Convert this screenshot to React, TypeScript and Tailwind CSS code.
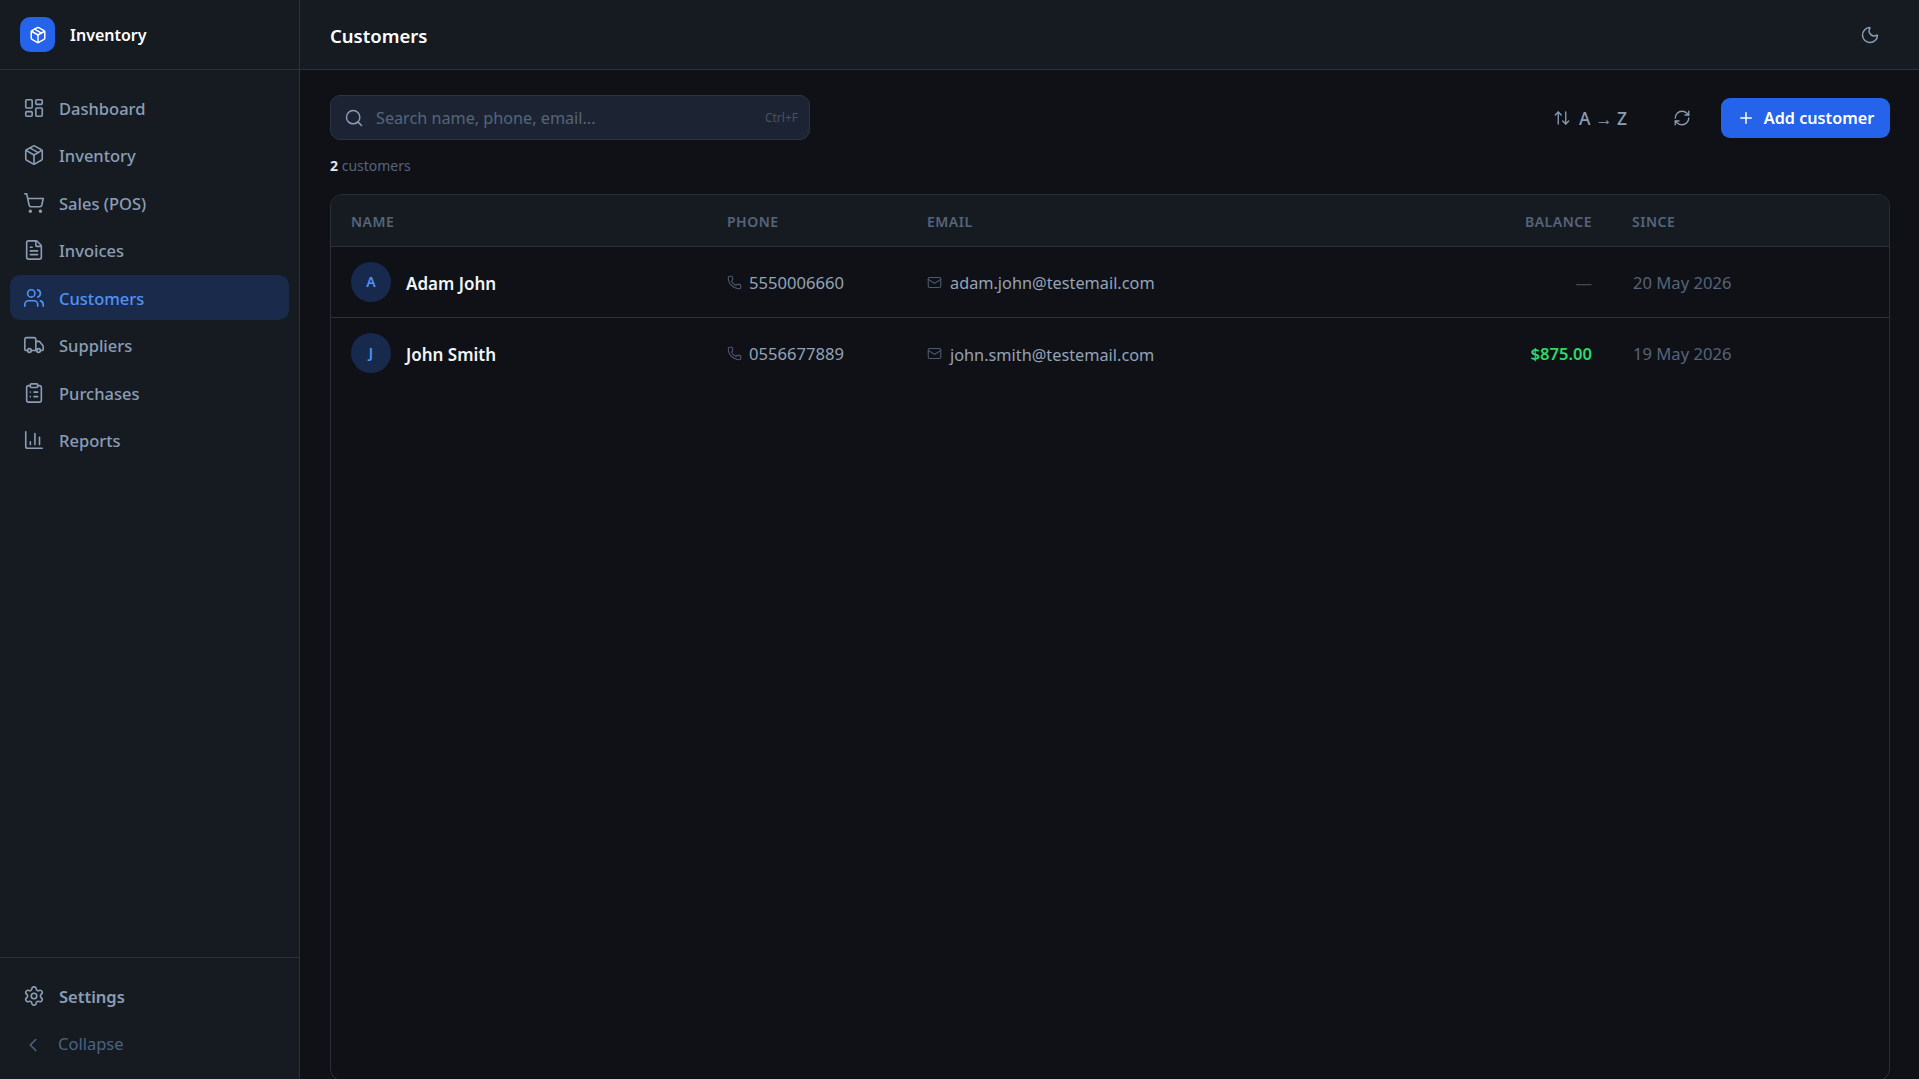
import {
  LayoutDashboard, Package, ShoppingCart, FileText, Users, Truck, ClipboardList, ChartColumn,
  Settings, ChevronLeft, Search, Phone, Mail, ArrowUpDown, RefreshCw, Plus, Moon,
} from "lucide-react";

const NAV_ITEMS = [
  { label: "Dashboard", icon: LayoutDashboard },
  { label: "Inventory", icon: Package },
  { label: "Sales (POS)", icon: ShoppingCart },
  { label: "Invoices", icon: FileText },
  { label: "Customers", icon: Users, active: true },
  { label: "Suppliers", icon: Truck },
  { label: "Purchases", icon: ClipboardList },
  { label: "Reports", icon: ChartColumn },
];

const CUSTOMERS = [
  { initial: "A", name: "Adam John", phone: "5550006660", email: "adam.john@testemail.com", balance: "—", since: "20 May 2026" },
  { initial: "J", name: "John Smith", phone: "0556677889", email: "john.smith@testemail.com", balance: "$875.00", since: "19 May 2026" },
];

function Sidebar() {
  return (
    <aside className="flex h-full w-[300px] shrink-0 flex-col border-r border-[#2c3138] bg-[#161b22]">
      <div className="flex h-[70px] shrink-0 items-center gap-[15px] border-b border-[#2c3138] pl-5">
        <div className="flex size-[35px] items-center justify-center rounded-[10px] bg-[#2563eb]">
          <Package className="size-[18px] text-white" strokeWidth={2} />
        </div>
        <span className="pt-px text-[16px] font-semibold text-white">Inventory</span>
      </div>
      <nav className="flex flex-1 flex-col gap-[2.5px] px-2.5 pt-[15px]">
        {NAV_ITEMS.map(({ label, icon: Icon, active }) => (
          <div
            key={label}
            className={
              active
                ? "flex h-[45px] items-center gap-[14px] rounded-[10px] bg-[#1a2a4a] px-[13px] text-[#4f93f7]"
                : "flex h-[45px] items-center gap-[14px] rounded-[10px] px-[13px] text-[#8b9db5]"
            }
          >
            <Icon className="size-[22px] shrink-0" strokeWidth={1.75} />
            <span className="pt-[3px] text-[16.5px] font-medium">{label}</span>
          </div>
        ))}
      </nav>
      <div className="flex shrink-0 flex-col gap-[2.5px] border-t border-[#2c3138] px-2.5 pt-[17px] pb-[12px]">
        <div className="flex h-[45px] items-center gap-[14px] px-[13px] text-[#8b9db5]">
          <Settings className="size-[22px] shrink-0 -translate-y-px" strokeWidth={1.75} />
          <span className="pt-px text-[16.5px] font-semibold">Settings</span>
        </div>
        <div className="flex h-[45px] items-center gap-[14px] px-3 text-[#4d6280]">
          <ChevronLeft className="size-[22px] shrink-0" strokeWidth={1.75} />
          <span className="text-[16.5px]">Collapse</span>
        </div>
      </div>
    </aside>
  );
}

function Toolbar() {
  return (
    <div className="flex items-center justify-between">
      <div className="flex h-[45px] w-[480px] items-center rounded-[10px] border border-[#2c3442] bg-[#1c2433] pr-[11px] pl-[13px]">
        <Search className="size-5 shrink-0 text-[#8b9db5]" strokeWidth={1.75} />
        <span className="ml-3 flex-1 pt-[2px] text-[16.2px] text-[#56647a]">Search name, phone, email...</span>
        <span className="text-[12px] text-[#465264]">Ctrl+F</span>
      </div>
      <div className="flex items-center">
        <div className="flex items-center gap-2 text-[#8b9db5]">
          <ArrowUpDown className="size-[18px]" strokeWidth={1.75} />
          <span className="pt-px text-[17.5px] font-medium">A → Z</span>
        </div>
        <RefreshCw className="mr-[30px] ml-[46px] size-[18px] text-[#8b9db5]" strokeWidth={1.75} />
        <button className="flex h-10 w-[169px] items-center justify-center gap-[9px] rounded-[9px] bg-[#2563eb] text-white">
          <Plus className="size-[18px]" strokeWidth={2} />
          <span className="pt-[2px] text-[16.2px] font-semibold">Add customer</span>
        </button>
      </div>
    </div>
  );
}

function CustomerTable() {
  const th = "border-b border-[#2c3138] px-5 pt-[2px] text-left text-[14px] font-semibold tracking-[0.5px] text-[#56647a]";
  return (
    <div className="mt-[17px] -mb-[2px] min-h-0 flex-1 overflow-hidden rounded-[12px] border border-[#2a2f37]">
      <table className="w-full table-fixed border-collapse">
        <colgroup>
          <col className="w-[376px]" />
          <col className="w-[200px]" />
          <col />
          <col className="w-[160px]" />
          <col className="w-[279px]" />
        </colgroup>
        <thead className="bg-[#161b22]">
          <tr className="h-[51px]">
            <th className={th}>NAME</th>
            <th className={th}>PHONE</th>
            <th className={th}>EMAIL</th>
            <th className={th + " !pr-[18px] !text-right"}>BALANCE</th>
            <th className={th + " !pl-[22px]"}>SINCE</th>
          </tr>
        </thead>
        <tbody>
          {CUSTOMERS.map((c) => (
            <tr key={c.name} className="h-[71px] border-b border-[#2c3138] last:border-b-0">
              <td className="px-5">
                <div className="flex items-center gap-[15px]">
                  <div className="flex size-10 items-center justify-center rounded-full bg-[#172a4d] text-[14px] font-semibold text-[#4f93f7]">
                    {c.initial}
                  </div>
                  <span className="pt-1 text-[17px] font-semibold text-[#f1f5f9]">{c.name}</span>
                </div>
              </td>
              <td className="px-5">
                <div className="flex items-center gap-[7px] pt-1 text-[16.6px] text-[#94a3b8]">
                  <Phone className="size-[15px] -translate-y-px text-[#4d5a6e]" strokeWidth={1.75} />
                  {c.phone}
                </div>
              </td>
              <td className="px-5">
                <div className="flex items-center gap-2 pt-1 text-[16.3px] text-[#94a3b8]">
                  <Mail className="size-[15px] -translate-y-px text-[#4d5a6e]" strokeWidth={1.75} />
                  {c.email}
                </div>
              </td>
              <td className={c.balance === "—" ? "pt-1 pr-[18px] pl-5 text-right text-[16.6px] text-[#3f4a5a]" : "pt-1 pr-[18px] pl-5 text-right text-[16.6px] font-semibold text-[#2fd86a]"}>
                {c.balance}
              </td>
              <td className="pt-1 pr-5 pl-[23px] text-[16.6px] text-[#56647a]">{c.since}</td>
            </tr>
          ))}
        </tbody>
      </table>
    </div>
  );
}

export default function App() {
  return (
    <div className="flex h-[1079px] w-[1919px] overflow-hidden bg-[#0f1117] font-['Noto_Sans','Open_Sans',sans-serif]">
      <Sidebar />
      <main className="flex min-w-0 flex-1 flex-col">
        <header className="flex h-[70px] shrink-0 items-center justify-between border-b border-[#2c3138] bg-[#161b22] pr-[39px] pl-[30px]">
          <h1 className="pt-[2px] text-[18.5px] font-semibold text-white">Customers</h1>
          <Moon className="size-5 text-[#8b9db5]" strokeWidth={1.75} />
        </header>
        <div className="flex min-h-0 flex-1 flex-col pt-[25px] pr-[29px] pl-[30px]">
          <Toolbar />
          <p className="mt-[15px] text-[14px] leading-[22px] text-[#56647a]">
            <span className="font-bold text-[#e2e8f0]">2</span> customers
          </p>
          <CustomerTable />
        </div>
      </main>
    </div>
  );
}
